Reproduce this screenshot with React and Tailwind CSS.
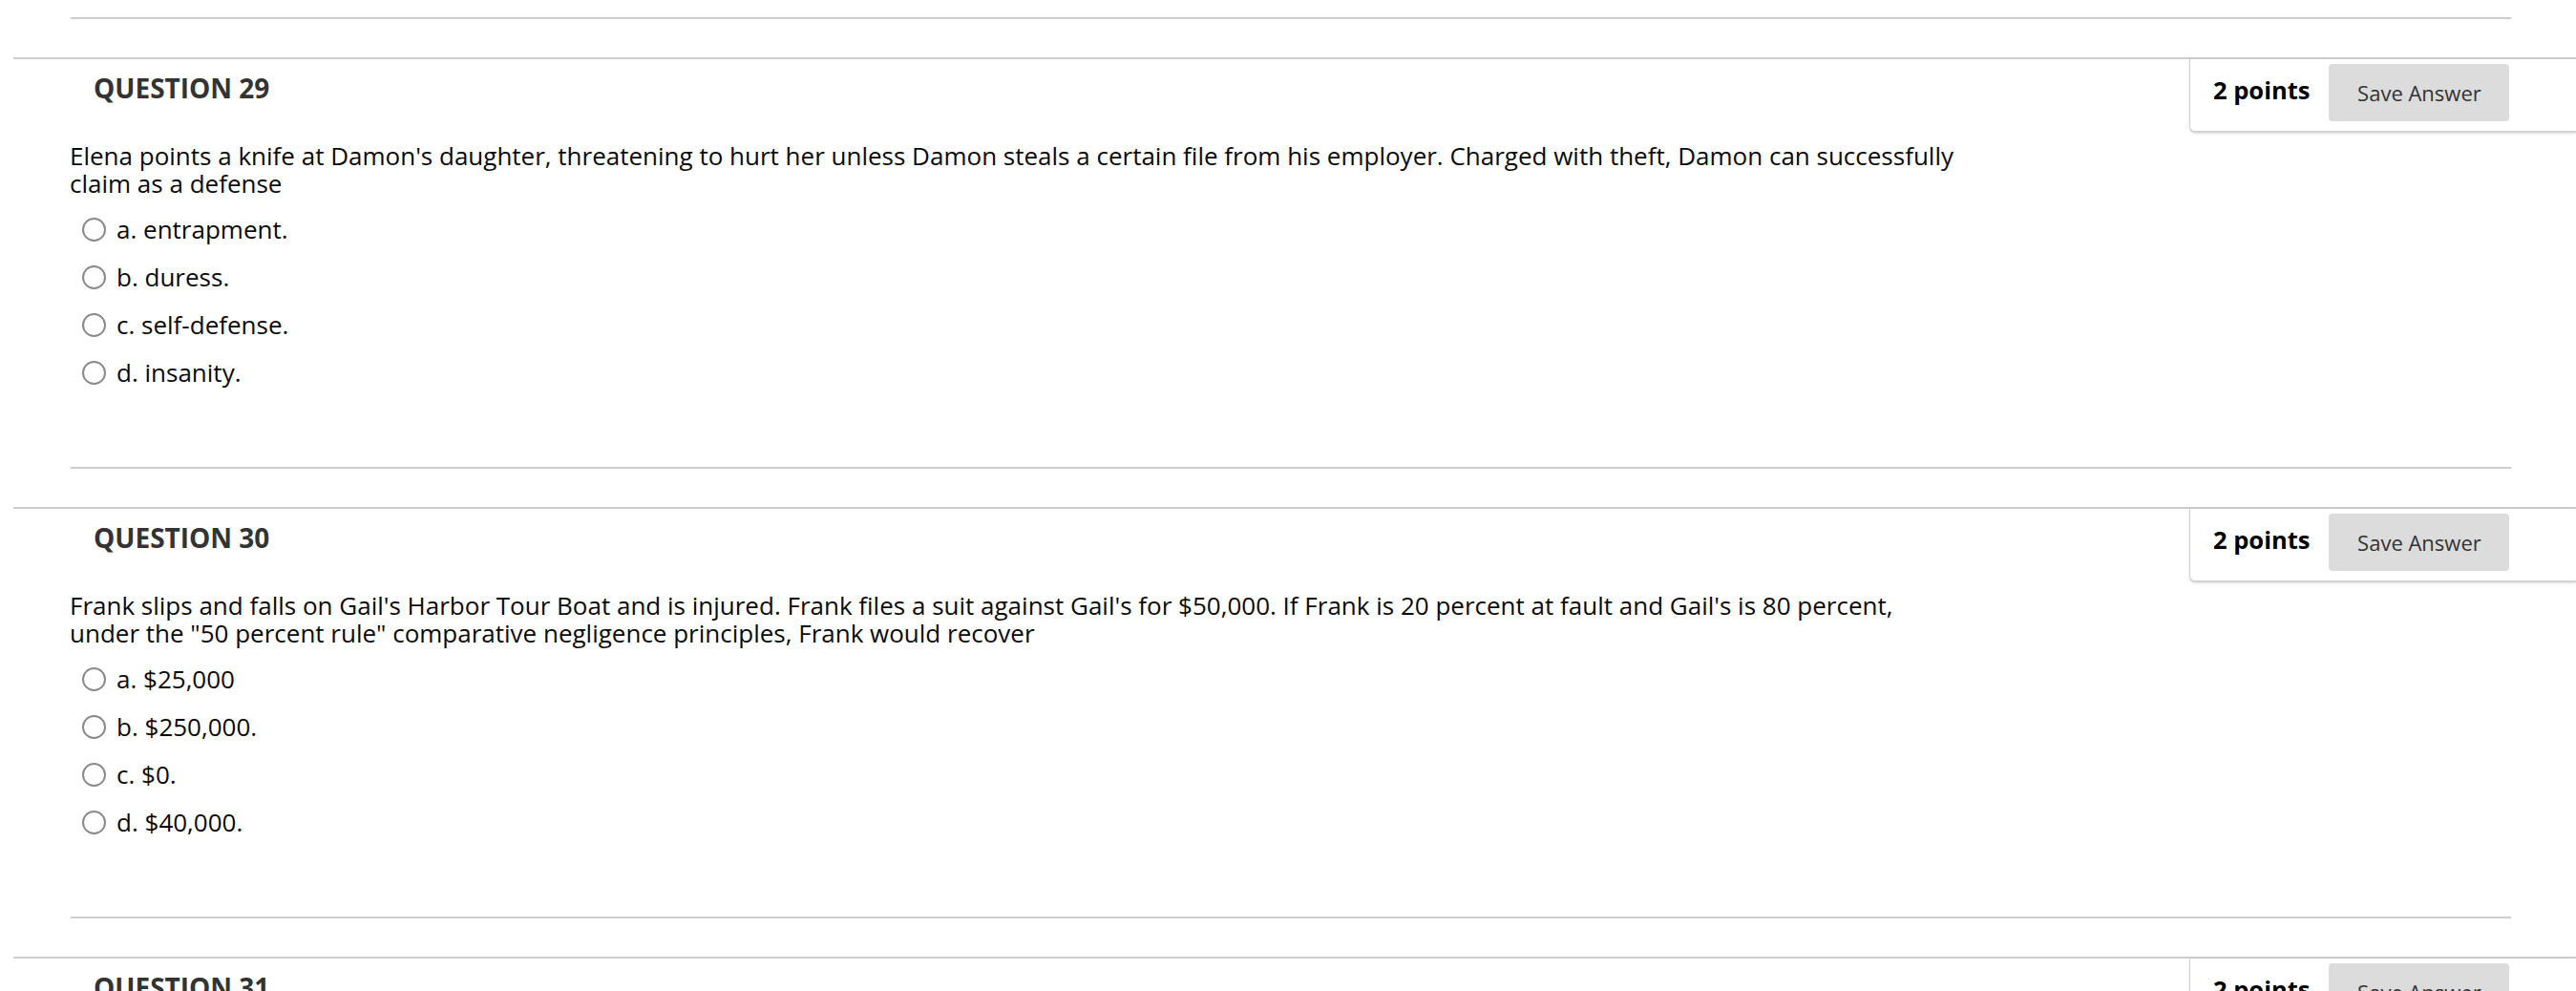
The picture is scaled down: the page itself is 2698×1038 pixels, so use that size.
const questions = [
  {
    number: 29,
    points: 2,
    text: [
      "Elena points a knife at Damon's daughter, threatening to hurt her unless Damon steals a certain file from his employer. Charged with theft, Damon can successfully",
      'claim as a defense',
    ],
    options: ['entrapment.', 'duress.', 'self-defense.', 'insanity.'],
  },
  {
    number: 30,
    points: 2,
    text: [
      "Frank slips and falls on Gail's Harbor Tour Boat and is injured. Frank files a suit against Gail's for $50,000. If Frank is 20 percent at fault and Gail's is 80 percent,",
      'under the "50 percent rule" comparative negligence principles, Frank would recover',
    ],
    options: ['$25,000', '$250,000.', '$0.', '$40,000.'],
  },
];

const letters = ['a', 'b', 'c', 'd'];

function HeaderRow({ number, points }) {
  return (
    <div className="mt-[40px] ml-[14px] border-t-2 border-[#cdcdcd] flex justify-between items-start">
      <h3 className="mt-[12px] pl-[84px] text-[28px] leading-[36px] font-bold text-[#333]">
        QUESTION {number}
      </h3>
      <div className="w-[405px] h-[77px] flex items-center pl-[24px] pt-[5px] pb-[10px] bg-white border-l border-b-2 border-[#d2d2d2] rounded-bl-[6px] shadow-[0_1px_3px_rgba(0,0,0,0.12)]">
        <span className="pb-[7px] text-[25.5px] leading-[34px] font-bold text-black whitespace-nowrap">
          {points} points
        </span>
        <button className="ml-[20px] w-[189px] h-[60px] rounded-[4px] bg-[#dcdcdc] text-[22px] text-[#333] whitespace-nowrap">
          Save Answer
        </button>
      </div>
    </div>
  );
}

function Question({ q }) {
  return (
    <div>
      <HeaderRow number={q.number} points={q.points} />

      {/* question text */}
      <div className="mt-[10px] pl-[73px] text-[26px] leading-[29px] text-[#0a0a0a] whitespace-nowrap">
        {q.text.map((line, i) => (
          <div key={i}>{line}</div>
        ))}
      </div>

      {/* answers */}
      <div className="mt-[18px] pl-[86px] flex flex-col gap-[20px]">
        {q.options.map((opt, i) => (
          <label key={i} className="h-[30px] flex items-center text-[26px] leading-[30px] text-[#0a0a0a]">
            <span className="w-[25px] h-[25px] rounded-full border-2 border-[#8a8a8a] bg-white shrink-0" />
            <span className="ml-[11px] whitespace-nowrap">
              {letters[i]}. {opt}
            </span>
          </label>
        ))}
      </div>

      <div className="mt-[84px] ml-[74px] w-[2556px] h-[2px] bg-[#cdcdcd]" />
    </div>
  );
}

export default function App() {
  return (
    <div
      className="min-h-screen bg-white pt-[18px] overflow-hidden"
      style={{ fontFamily: '"Open Sans", "Noto Sans", sans-serif' }}
    >
      <div className="ml-[74px] w-[2556px] h-[2px] bg-[#cdcdcd]" />
      {questions.map((q) => (
        <Question key={q.number} q={q} />
      ))}
      <HeaderRow number={31} points={2} />
    </div>
  );
}
